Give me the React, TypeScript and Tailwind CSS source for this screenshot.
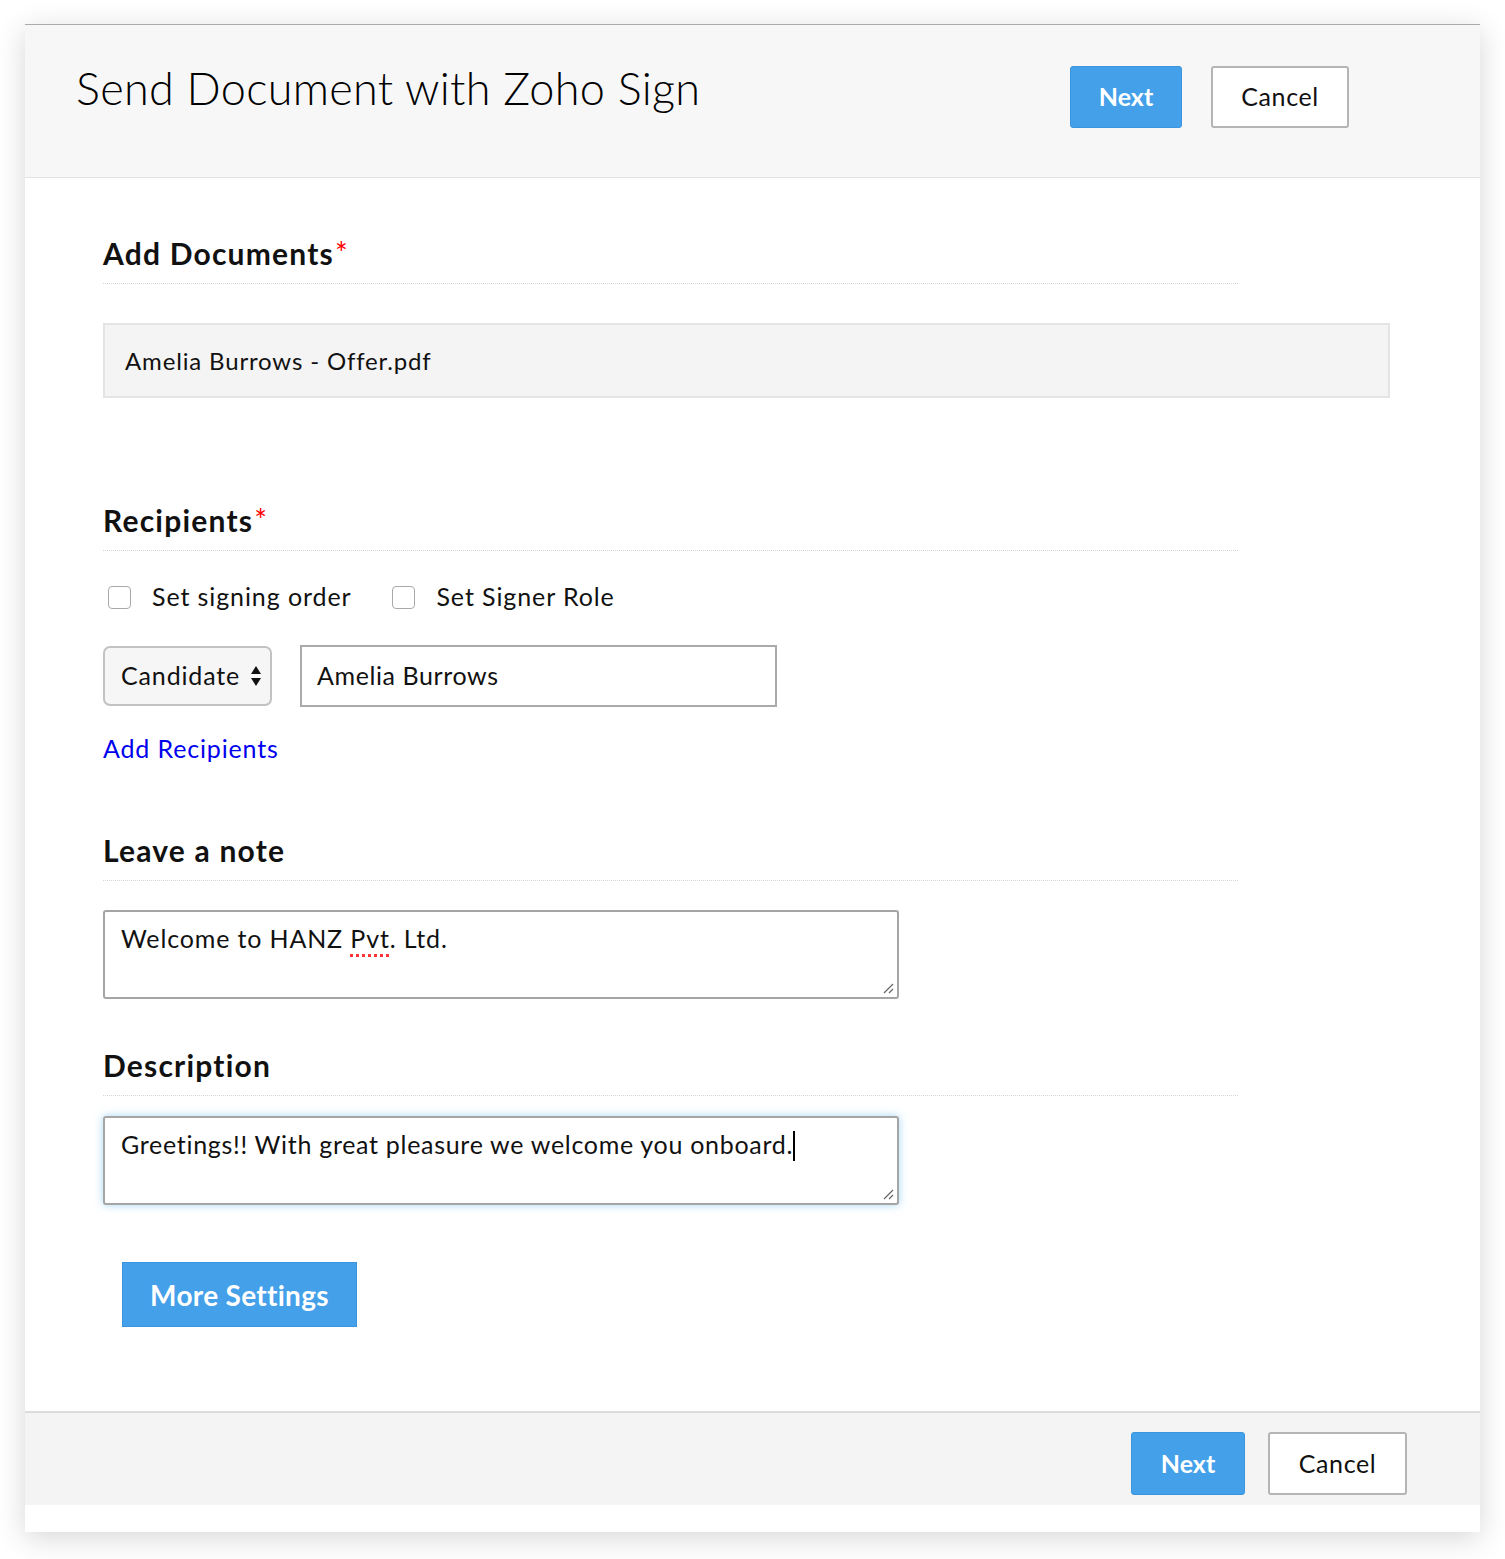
import React from 'react';

const font = { fontFamily: 'Lato, "Open Sans", sans-serif' };

function SectionTitle({ label, required }: { label: string; required?: boolean }) {
  return (
    <div className="w-[1135px] border-b border-dotted border-[#d6d6d6] pb-[12px]">
      <h2 className="h-[36px] text-[30px] leading-[36px] font-bold text-[#111] tracking-[1.2px]">
        {label}
        {required && (
          <span className="relative top-[-1px] ml-[1px] text-[#f00] text-[30px] leading-none font-normal tracking-normal">*</span>
        )}
      </h2>
    </div>
  );
}

function Checkbox({ label }: { label: string }) {
  return (
    <label className="flex items-center h-[30px]">
      <span className="w-[23px] h-[23px] rounded-[4px] border border-[#a9a9a9] bg-white ml-[5px]" />
      <span className="ml-[21px] text-[25px] text-[#111] tracking-[0.9px]">{label}</span>
    </label>
  );
}

function ResizeHandle() {
  return (
    <svg className="absolute right-[3px] bottom-[3px]" width="12" height="12" viewBox="0 0 12 12">
      <path d="M11 2 L2 11 M11 7 L7 11" stroke="#666" strokeWidth="1.2" />
    </svg>
  );
}

export default function App() {
  return (
    <div className="min-h-[1559px] bg-white pt-[24px]" style={font}>
      <div className="ml-[25px] w-[1455px] bg-white border-t border-[#aaa] shadow-[0_6px_28px_rgba(0,0,0,0.16)]">
        {/* header */}
        <div className="h-[153px] bg-[#f7f7f7] border-b border-[#e2e2e2] flex items-start justify-between pl-[51px] pr-[131px] pt-[41px]">
          <h1 className="text-[45px] leading-[44px] font-light text-[#000] tracking-[0.3px]">
            Send Document with Zoho Sign
          </h1>
          <div className="flex gap-[29px]">
            <button className="w-[112px] h-[62px] rounded-[3px] bg-[#43a0e9] border border-[#3a95de] text-white text-[25px] font-bold">
              Next
            </button>
            <button className="w-[138px] h-[62px] rounded-[3px] bg-white border-2 border-[#b5b5b5] text-[#111] text-[25px] tracking-[0.6px]">
              Cancel
            </button>
          </div>
        </div>

        {/* body */}
        <div className="pl-[78px] pt-[57px] tracking-[0.85px]">
          <SectionTitle label="Add Documents" required />
          <div className="mt-[39px] w-[1287px] h-[75px] bg-[#f4f4f4] border-2 border-[#e4e4e4] flex items-center pl-[20px] text-[24px] text-[#111]">
            Amelia Burrows - Offer.pdf
          </div>

          <div className="mt-[104px]">
            <SectionTitle label="Recipients" required />
          </div>
          <div className="mt-[31px] flex items-center gap-[36px]">
            <Checkbox label="Set signing order" />
            <Checkbox label="Set Signer Role" />
          </div>
          <div className="mt-[33px] flex items-center gap-[28px]">
            <div className="w-[169px] h-[60px] rounded-[7px] bg-[#f6f6f6] border-2 border-[#c2c2c2] flex items-center pl-[16px] pr-[8px] justify-between text-[25px] text-[#111]">
              <span>Candidate</span>
              <svg width="12" height="24" viewBox="0 0 12 24">
                <path d="M6 2 L11 10 L1 10 Z" fill="#111" />
                <path d="M1 14 L11 14 L6 22 Z" fill="#111" />
              </svg>
            </div>
            <div className="w-[477px] h-[62px] border-2 border-[#aaa] bg-white flex items-center pl-[15px] text-[25px] text-[#111] tracking-[0.6px]">
              Amelia Burrows
            </div>
          </div>
          <div className="mt-[26px]">
            <a className="text-[25px] leading-[30px] text-[#0000ee]">Add Recipients</a>
          </div>

          <div className="mt-[68px]">
            <SectionTitle label="Leave a note" />
          </div>
          <div className="relative mt-[29px] w-[796px] h-[89px] border-2 border-[#a5a5a5] rounded-[3px] bg-white pl-[16px] pt-[10px] text-[25px] leading-[32px] text-[#111]">
            Welcome to HANZ{' '}
            <span className="underline decoration-dotted decoration-[#f33] decoration-[3px] underline-offset-[6px]">Pvt</span>
            . Ltd.
            <ResizeHandle />
          </div>

          <div className="mt-[48px]">
            <SectionTitle label="Description" />
          </div>
          <div className="relative mt-[20px] w-[796px] h-[89px] border-2 border-[#a5a5a5] rounded-[3px] bg-white pl-[16px] pt-[10px] text-[25px] leading-[32px] text-[#111] tracking-[0.7px] shadow-[0_0_8px_rgba(90,180,235,0.55)]">
            Greetings!! With great pleasure we welcome you onboard.
            <span className="inline-block w-[2px] h-[30px] bg-black align-middle -mt-[4px]" />
            <ResizeHandle />
          </div>

          <button className="mt-[57px] ml-[19px] w-[235px] h-[65px] bg-[#43a0e9] border border-[#3a95de] text-white text-[28px] font-bold tracking-[0.3px]">
            More Settings
          </button>
        </div>

        {/* footer */}
        <div className="mt-[84px] border-t-2 border-[#dcdcdc] bg-[#f4f4f4] h-[94px] flex justify-end gap-[23px] pr-[73px] pt-[19px]">
          <button className="w-[114px] h-[63px] rounded-[3px] bg-[#43a0e9] border border-[#3a95de] text-white text-[25px] font-bold">
            Next
          </button>
          <button className="w-[139px] h-[63px] rounded-[3px] bg-white border-2 border-[#b5b5b5] text-[#111] text-[25px] tracking-[0.6px]">
            Cancel
          </button>
        </div>
        <div className="h-[27px] bg-white" />
      </div>
    </div>
  );
}
